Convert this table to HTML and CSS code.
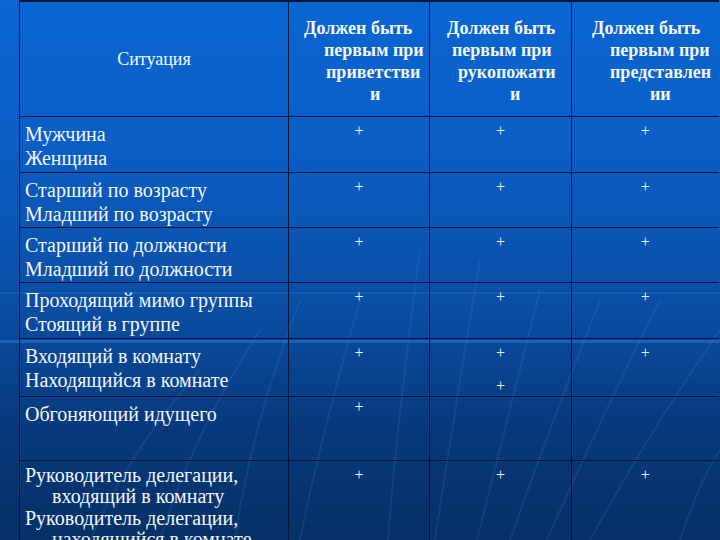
FILE: index.html
```html
<!DOCTYPE html>
<html lang="ru">
<head>
<meta charset="utf-8">
<title>Таблица</title>
<link rel="stylesheet" href="styles.css">
</head>
<body>
<div class="stage">
  <svg class="streaks" width="720" height="540" viewBox="0 0 720 540">
    <g fill="none" stroke="#5d9bf0" stroke-width="2" opacity="0.13">
      <path d="M388 540 Q396 430 420 250"/>
      <path d="M435 540 Q450 440 480 260"/>
      <path d="M477 540 Q505 430 540 290"/>
      <path d="M510 540 Q545 440 600 300"/>
      <path d="M547 540 Q600 420 660 300"/>
      <path d="M590 540 Q650 430 720 330"/>
      <path d="M235 540 Q250 430 300 300"/>
      <path d="M160 540 Q190 440 260 330"/>
      <path d="M90 540 Q130 450 200 370"/>
      <path d="M300 540 Q320 440 360 300"/>
      <path d="M680 540 Q700 480 720 450"/>
    </g>
    <rect x="0" y="340" width="720" height="3" fill="#3f86ea" opacity="0.4"/>
    <rect x="0" y="292" width="720" height="2" fill="#3f86ea" opacity="0.2"/>
  </svg>
  <table class="grid">
    <colgroup>
      <col class="c1"><col class="c2"><col class="c3"><col class="c4">
    </colgroup>
    <tr class="head">
      <td class="sit">Ситуация</td>
      <td class="hd">
        <span class="l" style="padding-left:15px">Должен быть</span>
        <span class="l" style="padding-left:35px">первым при</span>
        <span class="l" style="padding-left:37px">приветстви</span>
        <span class="l" style="padding-left:81px">и</span>
      </td>
      <td class="hd">
        <span class="l" style="padding-left:17px">Должен быть</span>
        <span class="l" style="padding-left:22px">первым при</span>
        <span class="l" style="padding-left:28px">рукопожати</span>
        <span class="l" style="padding-left:80px">и</span>
      </td>
      <td class="hd">
        <span class="l" style="padding-left:20px">Должен быть</span>
        <span class="l" style="padding-left:38px">первым при</span>
        <span class="l" style="padding-left:38px">представлен</span>
        <span class="l" style="padding-left:78px">ии</span>
      </td>
    </tr>
    <tr class="r r1">
      <td class="name"><span class="ln">Мужчина</span><span class="ln">Женщина</span></td>
      <td class="pl">+</td><td class="pl">+</td><td class="pl">+</td>
    </tr>
    <tr class="r r2">
      <td class="name"><span class="ln">Старший по возрасту</span><span class="ln">Младший по возрасту</span></td>
      <td class="pl">+</td><td class="pl">+</td><td class="pl">+</td>
    </tr>
    <tr class="r r3">
      <td class="name"><span class="ln">Старший по должности</span><span class="ln">Младший по должности</span></td>
      <td class="pl">+</td><td class="pl">+</td><td class="pl">+</td>
    </tr>
    <tr class="r r4">
      <td class="name"><span class="ln">Проходящий мимо группы</span><span class="ln">Стоящий в группе</span></td>
      <td class="pl">+</td><td class="pl">+</td><td class="pl">+</td>
    </tr>
    <tr class="r r5">
      <td class="name"><span class="ln">Входящий в комнату</span><span class="ln">Находящийся в комнате</span></td>
      <td class="pl">+</td>
      <td class="pl"><span class="p">+</span><span class="p second">+</span></td>
      <td class="pl">+</td>
    </tr>
    <tr class="r r6">
      <td class="name"><span class="ln">Обгоняющий идущего</span></td>
      <td class="pl high">+</td><td class="pl"></td><td class="pl"></td>
    </tr>
    <tr class="r r7">
      <td class="name last">
        <span class="ln">Руководитель делегации,</span>
        <span class="ln ind">входящий в комнату</span>
        <span class="ln">Руководитель делегации,</span>
        <span class="ln ind">находящийся в комнате</span>
      </td>
      <td class="pl">+</td><td class="pl">+</td><td class="pl">+</td>
    </tr>
  </table>
</div>
</body>
</html>
```
FILE: styles.css
```css
html, body {
  margin: 0;
  padding: 0;
  background: #07346a;
}
.stage {
  display: grid;
  width: 720px;
  height: 540px;
  overflow: hidden;
  background: linear-gradient(180deg, #0a66d2 0%, #0a5fc6 25%, #0a4fa6 55%, #07397a 80%, #063066 100%);
  font-family: "Liberation Serif", "Times New Roman", serif;
  color: #f4f7ff;
}
.stage > * {
  grid-area: 1 / 1;
}
.streaks {
  display: block;
}
.grid {
  align-self: start;
  margin-left: 19px;
  border-collapse: collapse;
  table-layout: fixed;
  width: 699px;
}
.c1 { width: 269px; }
.c2 { width: 141px; }
.c3 { width: 142px; }
.c4 { width: 147px; }
.grid td {
  border: 1px solid #03143c;
  padding: 0;
  vertical-align: top;
}
.grid td:last-child {
  border-right: none;
}
.grid tr:first-child td {
  border-top: 2px solid #03143c;
}
.head { height: 115px; }
.r1 { height: 56px; }
.r2 { height: 55px; }
.r3 { height: 55px; }
.r4 { height: 56px; }
.r5 { height: 58px; }
.r6 { height: 64px; }
.r7 { height: 100px; }
.sit {
  text-align: center;
  vertical-align: middle !important;
  font-size: 18px;
  padding-top: 2px !important;
}
.hd {
  font-weight: bold;
  font-size: 18px;
  line-height: 22px;
  padding-top: 15px !important;
  white-space: nowrap;
}
.l {
  display: block;
}
.name {
  font-size: 20px;
  line-height: 24px;
  padding: 5px 0 0 5px !important;
  white-space: nowrap;
}
.ln {
  display: block;
}
.name.last {
  line-height: 21.5px;
  padding-top: 4px !important;
}
.ind {
  padding-left: 27px;
}
.pl {
  text-align: center;
  font-size: 16px;
  line-height: 16px;
  padding-top: 6px !important;
}
.pl.high {
  padding-top: 2px !important;
}
.p {
  display: block;
}
.p.second {
  margin-top: 17px;
}
```
